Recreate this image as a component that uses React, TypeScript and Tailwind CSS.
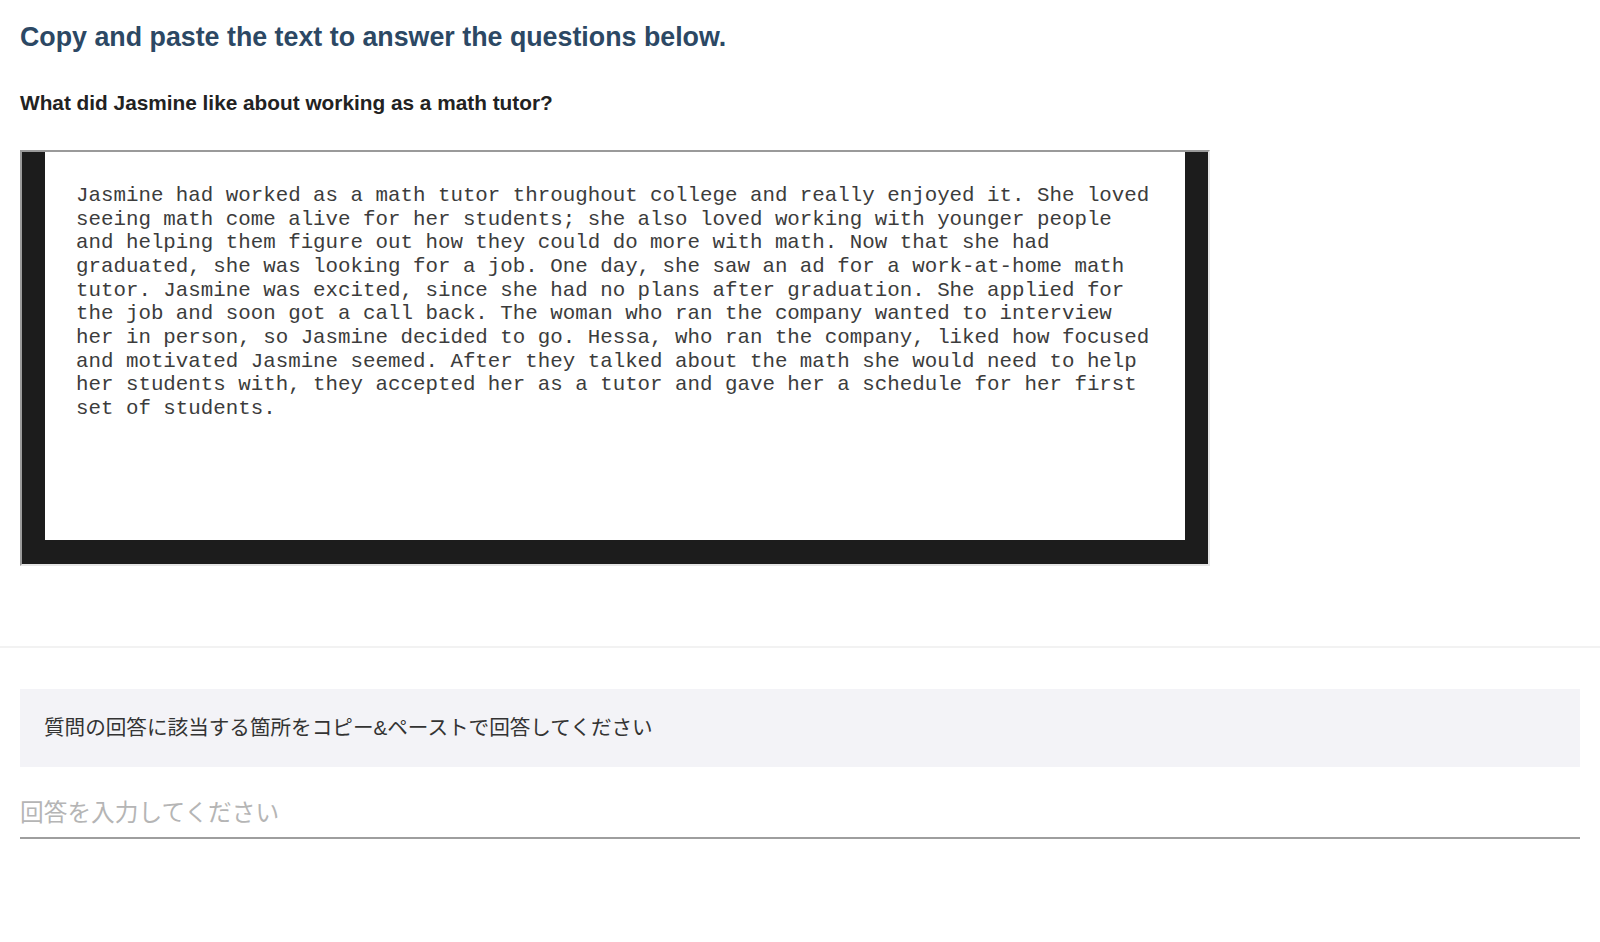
import React from 'react';

const passage =
  'Jasmine had worked as a math tutor throughout college and really enjoyed it. She loved seeing math come alive for her students; she also loved working with younger people and helping them figure out how they could do more with math. Now that she had graduated, she was looking for a job. One day, she saw an ad for a work-at-home math tutor. Jasmine was excited, since she had no plans after graduation. She applied for the job and soon got a call back. The woman who ran the company wanted to interview her in person, so Jasmine decided to go. Hessa, who ran the company, liked how focused and motivated Jasmine seemed. After they talked about the math she would need to help her students with, they accepted her as a tutor and gave her a schedule for her first set of students.';

export default function App() {
  return (
    <div className="min-h-[942px] bg-white font-['Liberation_Sans','Noto_Sans_CJK_JP',sans-serif]">
      <div className="px-5 pt-[21px]">
        <h1 className="text-[26.8px] leading-[32px] font-bold text-[#2c4864]">
          Copy and paste the text to answer the questions below.
        </h1>
        <h2 className="mt-[38px] text-[20.8px] leading-[24px] font-bold text-[#222]">
          What did Jasmine like about working as a math tutor?
        </h2>

        <div className="mt-[35px] w-[1190px] h-[416px] border-2 border-t-[#9a9a9a] border-l-[#9a9a9a] border-r-[#e6e6e6] border-b-[#e6e6e6] bg-[#1c1c1c] px-[23px] pb-[24px]">
          <div className="h-full bg-white pl-[31px] pt-[32px]">
            <p className="max-w-[86.5ch] font-['Liberation_Mono',monospace] text-[20.8px] leading-[23.65px] text-[#3c3c3c]">
              {passage}
            </p>
          </div>
        </div>
      </div>

      <div className="mt-[80px] h-[2px] bg-[#f2f2f2]" />

      <div className="px-5 pt-[41px]">
        <div className="h-[78px] flex items-center bg-[#f3f3f7] px-6 text-[20.6px] text-[#333]">
          質問の回答に該当する箇所をコピー&amp;ペーストで回答してください
        </div>
        <input
          type="text"
          placeholder="回答を入力してください"
          className="mt-[23px] block w-full h-[49px] border-b-2 border-[#9e9e9e] bg-transparent text-[23.7px] text-[#333] outline-none placeholder:text-[#b5b5b5] font-['Liberation_Sans','Noto_Sans_CJK_JP',sans-serif]"
        />
      </div>
    </div>
  );
}
